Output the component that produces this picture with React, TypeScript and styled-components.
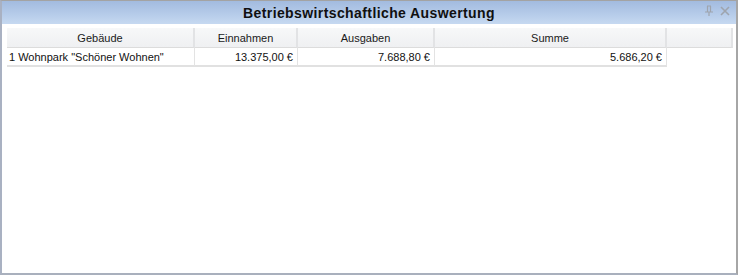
import styled, { createGlobalStyle } from "styled-components";

const GlobalStyle = createGlobalStyle`
  html, body {
    margin: 0;
    padding: 0;
    background: #ffffff;
  }
  body {
    font-family: "Liberation Sans", Arial, sans-serif;
  }
`;

const Panel = styled.div`
  box-sizing: border-box;
  width: 738px;
  height: 275px;
  display: flex;
  flex-direction: column;
  background: #ffffff;
  border: 1px solid #a3a3a3;
  border-left: 2px solid #a9b1c2;
  border-right: 2px solid #a6a6a6;
  border-bottom: 2px solid #a9b0bd;
`;

const TitleBar = styled.div`
  position: relative;
  height: 23px;
  display: flex;
  align-items: center;
  justify-content: center;
  background: linear-gradient(to bottom, #a2bbdf 0%, #b5cbe9 55%, #c6d9f1 100%);
`;

const Title = styled.span`
  font-size: 14px;
  font-weight: 700;
  color: #101010;
  letter-spacing: 0.4px;
`;

const TitleButtons = styled.div`
  position: absolute;
  right: 6px;
  top: 4px;
  display: flex;
  gap: 6px;
  align-items: center;
`;

const Body = styled.div`
  flex: 1;
  padding: 4px 0 0 5px;
`;

const Grid = styled.div`
  display: grid;
  grid-template-columns: 188px 103px 137px 232px 66px;
  width: 726px;
`;

const HeaderCell = styled.div`
  box-sizing: border-box;
  height: 20px;
  display: flex;
  align-items: center;
  justify-content: center;
  font-size: 11px;
  color: #1a1a1a;
  background: linear-gradient(to bottom, #f7f8f9 0%, #eff0f2 100%);
  border-right: 2px solid #e2e3e5;
  border-bottom: 1px solid #dcdcdc;
`;

const Cell = styled.div<{ $align?: "left" | "right" }>`
  box-sizing: border-box;
  height: 19px;
  display: flex;
  align-items: center;
  justify-content: ${(p) => (p.$align === "right" ? "flex-end" : "flex-start")};
  padding: 0 4px 0 2px;
  font-size: 11px;
  color: #111111;
  white-space: nowrap;
  border-right: 1px solid #e3e3e3;
  border-bottom: 2px solid #e1e1e1;
`;

const EmptyCell = styled.div``;

const PinIcon = () => (
  <svg width="10" height="12" viewBox="0 0 10 12">
    <path d="M3 1h4M3.5 1v6M6.5 1v6M1 7h8M5 7v4" stroke="#9ea4ad" strokeWidth="1.2" fill="none" />
  </svg>
);

const CloseIcon = () => (
  <svg width="10" height="10" viewBox="0 0 10 10">
    <path d="M1 1l8 8M9 1l-8 8" stroke="#9ea4ad" strokeWidth="1.6" />
  </svg>
);

const columns = ["Gebäude", "Einnahmen", "Ausgaben", "Summe", ""];

const rows = [
  { gebaeude: '1 Wohnpark "Schöner Wohnen"', einnahmen: "13.375,00 €", ausgaben: "7.688,80 €", summe: "5.686,20 €" },
];

export default function App() {
  return (
    <>
      <GlobalStyle />
      <Panel>
        <TitleBar>
          <Title>Betriebswirtschaftliche Auswertung</Title>
          <TitleButtons>
            <PinIcon />
            <CloseIcon />
          </TitleButtons>
        </TitleBar>
        <Body>
          <Grid>
            {columns.map((c, i) => (
              <HeaderCell key={i}>{c}</HeaderCell>
            ))}
            {rows.map((r) => (
              <>
                <Cell>{r.gebaeude}</Cell>
                <Cell $align="right">{r.einnahmen}</Cell>
                <Cell $align="right">{r.ausgaben}</Cell>
                <Cell $align="right">{r.summe}</Cell>
                <EmptyCell />
              </>
            ))}
          </Grid>
        </Body>
      </Panel>
    </>
  );
}
